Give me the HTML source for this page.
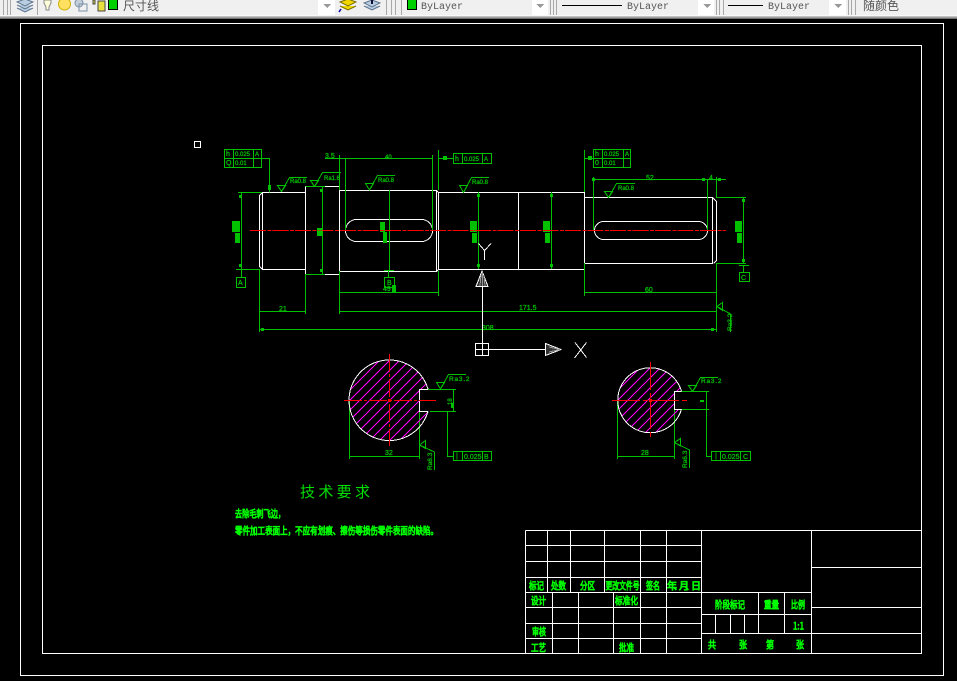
<!DOCTYPE html>
<html><head><meta charset="utf-8"><title>CAD</title>
<style>
html,body{margin:0;padding:0;background:#000;width:957px;height:681px;overflow:hidden}
svg{display:block}
.g{fill:none;stroke:#00c000;stroke-width:1}
.w{fill:none;stroke:#fff;stroke-width:1}
.b{fill:#00c000;stroke:none}
.t{font-family:"Liberation Sans","Noto Sans CJK SC",sans-serif;font-size:7px;fill:#00c800;stroke:#00c000;stroke-width:.25}
.c{font-family:"Noto Sans CJK SC",sans-serif;font-size:10px;fill:#00ff00;stroke:#00ff00;stroke-width:.8;dominant-baseline:central}
.u{font-family:"Liberation Mono","Noto Sans CJK SC",monospace;font-size:10px;fill:#555}
</style></head><body>
<svg width="957" height="681" viewBox="0 0 957 681" xmlns="http://www.w3.org/2000/svg" shape-rendering="crispEdges">
<rect width="957" height="681" fill="#000"/>
<defs>
<clipPath id="c1"><path d="M428 389A40.300 40.300 0 1 0 428 411.500H419.500V389Z"/></clipPath>
<clipPath id="c2"><path d="M681.400 391A32.500 32.500 0 1 0 681.400 409.500H674.500V391Z"/></clipPath>
</defs>
<!-- toolbar -->
<g>
<rect width="957" height="15" fill="#f0f0f0"/>
<rect y="15" width="957" height="1" fill="#f8f8f8"/>
<rect y="16" width="957" height="1" fill="#c0c0c0"/>
<rect y="17" width="957" height="1" fill="#a0a0a0"/>
<rect y="18" width="957" height="1" fill="#707070"/>
<g fill="#a8a8a8">
<rect x="3" y="0" width="1" height="15"/><rect x="7" y="0" width="1" height="15"/><rect x="10" y="0" width="1" height="15"/>
<rect x="37" y="0" width="1" height="15"/><rect x="386" y="0" width="1" height="15"/><rect x="391" y="0" width="1" height="15"/><rect x="395" y="0" width="1" height="15"/><rect x="401" y="0" width="1" height="15"/>
<rect x="550" y="0" width="1" height="15"/><rect x="553" y="0" width="1" height="15"/><rect x="556" y="0" width="1" height="15"/>
<rect x="716" y="0" width="1" height="15"/><rect x="719" y="0" width="1" height="15"/><rect x="723" y="0" width="1" height="15"/>
<rect x="848" y="0" width="1" height="15"/><rect x="851" y="0" width="1" height="15"/><rect x="855" y="0" width="1" height="15"/>
</g>
<rect x="318" y="0" width="17" height="15" fill="#fff"/>
<rect x="532" y="0" width="16" height="15" fill="#fff"/>
<rect x="698" y="0" width="16" height="15" fill="#fff"/>
<rect x="829" y="0" width="17" height="15" fill="#fff"/>
<rect x="108" y="0" width="10" height="10" fill="#000"/><rect x="109" y="0" width="8" height="9" fill="#00d000"/>
<rect x="407" y="0" width="10" height="10" fill="#000"/><rect x="408" y="0" width="8" height="9" fill="#00d000"/>
<rect x="562" y="5" width="60" height="1" fill="#000"/>
<rect x="728" y="5" width="35" height="1" fill="#000"/>
</g>
<g fill="#999">
<path d="M323 4h8l-4 4z"/><path d="M536 4h8l-4 4z"/><path d="M703 4h8l-4 4z"/><path d="M834 4h8l-4 4z"/>
</g>
<!-- toolbar icons -->
<g shape-rendering="auto">
<path d="M17 2L25 -1L33 2L25 6zM17 5L25 9L33 5M17 8L25 12L33 8" fill="#b9cde0" stroke="#5d7590" stroke-width="1"/>
<path d="M44 0h7v3l-2 4v3h-3V7l-2-4z" fill="#ffffd8" stroke="#888" stroke-width="1"/>
<circle cx="64.500" cy="4" r="6" fill="#ffe060" stroke="#cdb000"/>
<circle cx="79" cy="3" r="4" fill="#c5cfd8" stroke="#7890a8"/><rect x="79" y="4" width="8" height="7" fill="none" stroke="#7890a8"/>
<path d="M93 0h2v4h-2zM98 1h7v10h-7z" fill="#e8e040" stroke="#444" stroke-width="1"/>
<path d="M340 2l8-3 8 3-8 4zM340 6l8 4 8-4" fill="#f0d800" stroke="#7a6a00"/><path d="M341 9l-2 3" stroke="#00a" stroke-width="1.500"/>
<path d="M364 3l8-3 8 3-8 4zM364 6l8 4 8-4" fill="#b9cde0" stroke="#5d7590"/><path d="M372 0v4" stroke="#113" stroke-width="2"/>
</g>
<text x="123" y="10" font-family="'Noto Sans CJK SC',sans-serif" font-size="12" fill="#555">尺寸线</text>
<text x="421" y="9" class="u">ByLayer</text>
<text x="627" y="9" class="u">ByLayer</text>
<text x="768" y="9" class="u">ByLayer</text>
<text x="863" y="10" font-family="'Noto Sans CJK SC',sans-serif" font-size="12" fill="#555">随颜色</text>

<g>
<!-- frames -->
<rect x="20.500" y="23.500" width="923" height="652" class="w"/>
<rect x="42.500" y="45.500" width="879" height="608" class="w"/>
<rect x="194.500" y="141.500" width="6" height="6" class="w"/>
<!-- title block -->
<path class="w" d="M525.500 530.500V653.500M525.500 530.500H921.500M525.500 545.500H701.500M525.500 561.500H701.500M525.500 577.500H701.500M525.500 592.500H811.500M525.500 607.500H701.500M525.500 623.500H701.500M525.500 638.500H701.500
M547.500 530.500V592.500M570.500 530.500V592.500M604.500 530.500V592.500M640.500 530.500V653.500M666.500 530.500V653.500M701.500 530.500V653.500
M552.500 592.500V653.500M578.500 592.500V653.500M613.500 592.500V653.500
M811.500 530.500V653.500M811.500 567.500H921.500M811.500 607.500H921.500M701.500 633.500H921.500M701.500 614.500H811.500
M758.500 592.500V633.500M784.500 592.500V633.500M715.500 614.500V633.500M730.500 614.500V633.500M744.500 614.500V633.500"/>
<!-- shaft -->
<path class="w" d="M262.500 192.500H305.500V269.500H262.500ZM262.500 192.500L259.500 195.500V266.500L262.500 269.500
M305.500 186.500H339.500V274.500H305.500Z
M339.500 190.500H436.500V271.500H339.500ZM436.500 190.500L438.500 192.500M436.500 271.500L438.500 269.500
M438.500 192.500H584.500V269.500H438.500ZM518.500 192.500V269.500
M584.500 197.500H712.500V263.500H584.500ZM712.500 197.500L716.500 201.500V260.500L713.500 263.500"/>
</g>
<rect x="345.500" y="219.500" width="87" height="22" rx="11" class="w"/>
<rect x="594.500" y="221.500" width="113" height="18" rx="9" class="w"/>

<!-- green dims -->
<g>
<path class="g" d="M224.500 149.500H261.500V167.500H224.500ZM224.500 158.500H261.500M233.500 149.500V167.500M253.500 149.500V167.500M261.500 158.500H269.500V192.500
M238 192.500H262M241.500 192.500V277M236 269.500H260M236.500 277.500H245.500V287.500H236.500Z
M277.500 185.500H285.500L281.500 191.500ZM281.500 191.500L289.500 177.500H307
M310.500 180.500H318.500L314.500 186.500ZM314.500 186.500L322.500 172.500H341
M365.500 183.500H373.500L369.500 190ZM369.500 190L377.500 175.500H395
M459.500 185.500H467.500L463.500 192.500ZM463.500 192.500L471.500 177.500H489
M604.500 191.500H612.500L608.500 197.500ZM608.500 197.500L616.500 183.500H635
M322.500 186.500V274.500M305.500 186.500H325M305.500 274.500H325
M325 158.500H432.500M339.500 155V190M339.500 271V314M345.500 158V230M432.500 155V230M438.500 150V190M438.500 271V296
M453.500 153.500H491.500V163.500H453.500ZM462.500 153.500V163.500M482.500 153.500V163.500M438.500 158.500H453
M389.500 190V271M384 270.500H394M388.500 271V277M384.500 277.500H394.500V287.500H384.500Z
M340 292.500H438M260 311.500H305.500M259.500 269V332M305.500 274V314M339.500 311.500H716.500M259.500 329.500H716.500
M593.500 177V230M593.500 179.500H726M707.500 179V230M716.500 177V197M716.500 263V332
M551.500 192V269M478.500 192V269M584.500 150V192M584.500 263V296M584.500 158.500H593
M593.500 149.500H630.500V167.500H593.500ZM593.500 158.500H630.500M602.500 149.500V167.500M623.500 149.500V167.500
M743.500 197V263M716 197.500H746M716 263.500H746M739 265.500H749M743.500 265.500V272M739.500 272.500H749.500V281.500H739.500Z
M584.500 292.500H716.500M717 306.500L722.500 302.500V310.500ZM717 306.500L730.500 314V332
M436.500 382.500H444.500L440.500 389ZM440.500 389L448.500 374.500H466
M419 389.500H456M430 411.500H456M453.500 389.500V411.500M447.500 411.500V456.500H453M453.500 451.500H491.500V460.500H453.500ZM462.500 451.500V460.500M482.500 451.500V460.500
M349.500 456.500H419.500M349.500 400V459M419.500 411V459
M419.500 445L425.500 440.500V448.500ZM419.500 445L434.500 452V470
M688.500 385.500H696.500L692.500 391.500ZM692.500 391.500L700.500 377.500H718
M681 391.500H709M681 409.500H709M706.500 391V456.500H711M711.500 451.500H750.500V460.500H711.500ZM720.500 451.500V460.500M740.500 451.500V460.500
M617.500 456.500H674.500M617.500 400V459M674.500 410V459
M674.500 442.500L680.500 438.500V446ZM674.500 442.500L689.500 450V468"/>
<path class="b" d="M232 221h8v11h-8zM235 233h5v10h-5zM380 222h5v10h-5zM383 232h4v11h-4zM470 221h7v11h-7zM472 233h5v10h-5zM543 221h7v11h-7zM545 233h5v10h-5zM735 221h7v11h-7zM737 233h5v10h-5zM317 228h5v8h-5zM268 185h3v5h-3zM443 156h4v4h-4zM588 156h4v4h-4zM392 285h4v7h-4zM700 400h4v2h-4zM451 403h3v5h-3zM320 189h3v3h-3zM320 269h3v3h-3zM239 195h2v3h-2zM239 264h2v3h-2zM477 194h3v3h-3zM477 264h3v3h-3zM550 194h3v3h-3zM550 264h3v3h-3zM742 199h3v3h-3zM742 259h3v3h-3zM592 178h3v3h-3zM702 178h3v3h-3zM718 178h3v3h-3zM261 328h3v3h-3zM711 328h3v3h-3z"/>
</g>
<path d="M250 230.500H726" stroke="#ff0000" stroke-width="1" stroke-dasharray="16 1.500 4 1" fill="none"/>
<g class="t">
<text x="226" y="156">h</text><text x="235" y="156" font-size="6">0.025</text><text x="255" y="156" font-size="6">A</text>
<text x="226" y="165">Q</text><text x="235" y="165" font-size="6">0.01</text>
<text x="290" y="183" font-size="6">Ra0.8</text>
<text x="324" y="180" font-size="6">Ra1.6</text>
<text x="378" y="182" font-size="6">Ra0.8</text>
<text x="472" y="184" font-size="6">Ra0.8</text>
<text x="618" y="190" font-size="6">Ra0.8</text>
<text x="325" y="158">3.5</text>
<text x="385" y="159" font-size="6">40</text>
<text x="455" y="161">h</text><text x="464" y="161" font-size="6">0.025</text><text x="484" y="161" font-size="6">A</text>
<text x="595" y="156">h</text><text x="604" y="156" font-size="6">0.025</text><text x="625" y="156" font-size="6">A</text>
<text x="595" y="165">0</text><text x="604" y="165" font-size="6">0.01</text>
<text x="646" y="180">52</text><text x="709" y="180">4</text>
<text x="238" y="285">A</text><text x="387" y="285">B</text><text x="741" y="280">C</text>
<text x="383" y="291">49</text><text x="279" y="311">21</text>
<text x="519" y="310">171.5</text><text x="482" y="330">308</text><text x="645" y="292">60</text>
<text x="385" y="455">32</text><text x="641" y="455">28</text>
<text x="449" y="381" font-size="6.500" letter-spacing=".8">Ra3.2</text>
<text x="701" y="383" font-size="6.500" letter-spacing=".8">Ra3.2</text>
<text x="456" y="458">|</text><text x="464" y="459" font-size="7">0.025</text><text x="484" y="459">B</text>
<text x="715" y="458">|</text><text x="722" y="459" font-size="7">0.025</text><text x="743" y="459">C</text>
<text transform="translate(732,331) rotate(-90)" font-size="6.500">Ra3.2</text>
<text transform="translate(432,470) rotate(-90)" font-size="6.500">Ra6.3</text>
<text transform="translate(687,468) rotate(-90)" font-size="6.500">Ra6.3</text>
<text transform="translate(452,405) rotate(-90)" font-size="6">18</text>
<text transform="translate(322,236) rotate(-90)" font-size="6">45</text>
</g>

<!-- UCS -->
<path class="w" d="M475.500 343.500H488.500V355.500H475.500ZM482.500 355.500V287M475.500 349.500H545"/>
<path d="M476 286.500H488L482 271Z" fill="#333" stroke="#fff"/>
<path d="M545.500 343.500V355.500L561 349.500Z" fill="#333" stroke="#fff"/>
<path d="M481 275L480 286M484 275L485 286M482.500 272V286" stroke="#999" fill="none"/>
<path d="M549 347L560 349.500M549 352L560 349.500" stroke="#999" fill="none"/>
<path class="w" d="M575 342.500L586.500 357.500M586.500 342.500L574.500 358M478.500 243.500L484.500 250.500L491 243.500M484.500 250.500V260" />

<!-- sections -->
<g clip-path="url(#c1)"><path fill="none" stroke="#ff00ff" stroke-width="1" d="M265 445l90-90M275 445l90-90M285 445l90-90M295 445l90-90M305 445l90-90M315 445l90-90M325 445l90-90M335 445l90-90M345 445l90-90M355 445l90-90M365 445l90-90M375 445l90-90M385 445l90-90M395 445l90-90M405 445l90-90M415 445l90-90M425 445l90-90"/></g>
<path d="M428 389A40.300 40.300 0 1 0 428 411.500" class="w"/>
<path d="M428 389.500H419.500V411.500H428" class="w"/>
<path d="M344 400.500H436M389.500 354V446" stroke="#ff0000" fill="none" stroke-dasharray="18 2 3 2"/>
<g clip-path="url(#c2)"><path fill="none" stroke="#ff00ff" stroke-width="1" d="M550 438l75-75M560 438l75-75M570 438l75-75M580 438l75-75M590 438l75-75M600 438l75-75M610 438l75-75M620 438l75-75M630 438l75-75M640 438l75-75M650 438l75-75M660 438l75-75M670 438l75-75M680 438l75-75"/></g>
<path d="M681.400 391A32.500 32.500 0 1 0 681.400 409.500" class="w"/>
<path d="M681.400 391.500H674.500V409.500H681.400" class="w"/>
<path d="M612 400.500H688M650.500 362V438" stroke="#ff0000" fill="none" stroke-dasharray="28 3 5 3"/>
<rect x="649" y="399" width="3" height="3" fill="#ff0000"/>
<rect x="388" y="399" width="3" height="3" fill="#ff0000"/>

<!-- notes -->
<text x="300" y="497" font-family="'WenQuanYi Zen Hei','Noto Sans CJK SC',sans-serif" font-size="15" fill="#00e000" textLength="70">技术要求</text>
<text class="c" x="235" y="513" textLength="50" lengthAdjust="spacingAndGlyphs">去除毛刺飞边，</text>
<text class="c" x="235" y="530" textLength="203" lengthAdjust="spacingAndGlyphs">零件加工表面上，不应有划痕、擦伤等损伤零件表面的缺陷。</text>
<!-- title text -->
<text class="c" x="529" y="585" textLength="15" lengthAdjust="spacingAndGlyphs">标记</text>
<text class="c" x="551" y="585" textLength="15" lengthAdjust="spacingAndGlyphs">处数</text>
<text class="c" x="580" y="585" textLength="15" lengthAdjust="spacingAndGlyphs">分区</text>
<text class="c" x="605.500" y="585" textLength="34" lengthAdjust="spacingAndGlyphs">更改文件号</text>
<text class="c" x="646" y="585" textLength="14" lengthAdjust="spacingAndGlyphs">签名</text>
<text class="c" x="667" y="585" textLength="34">年、月、日</text>
<text class="c" x="531" y="600" textLength="15" lengthAdjust="spacingAndGlyphs">设计</text>
<text class="c" x="615" y="600" textLength="23" lengthAdjust="spacingAndGlyphs">标准化</text>
<text class="c" x="532" y="631" textLength="14" lengthAdjust="spacingAndGlyphs">审核</text>
<text class="c" x="531" y="647" textLength="15" lengthAdjust="spacingAndGlyphs">工艺</text>
<text class="c" x="619" y="647" textLength="15" lengthAdjust="spacingAndGlyphs">批准</text>
<text class="c" x="715" y="604" textLength="30" lengthAdjust="spacingAndGlyphs">阶段标记</text>
<text class="c" x="764" y="604" textLength="15" lengthAdjust="spacingAndGlyphs">重量</text>
<text class="c" x="791" y="604" textLength="14" lengthAdjust="spacingAndGlyphs">比例</text>
<text class="c" x="793" y="625" textLength="11" lengthAdjust="spacingAndGlyphs">1:1</text>
<text class="c" x="708" y="644" textLength="8" lengthAdjust="spacingAndGlyphs">共</text>
<text class="c" x="739" y="644" textLength="8" lengthAdjust="spacingAndGlyphs">张</text>
<text class="c" x="766" y="644" textLength="8" lengthAdjust="spacingAndGlyphs">第</text>
<text class="c" x="796" y="644" textLength="8" lengthAdjust="spacingAndGlyphs">张</text>
</svg>
</body></html>
